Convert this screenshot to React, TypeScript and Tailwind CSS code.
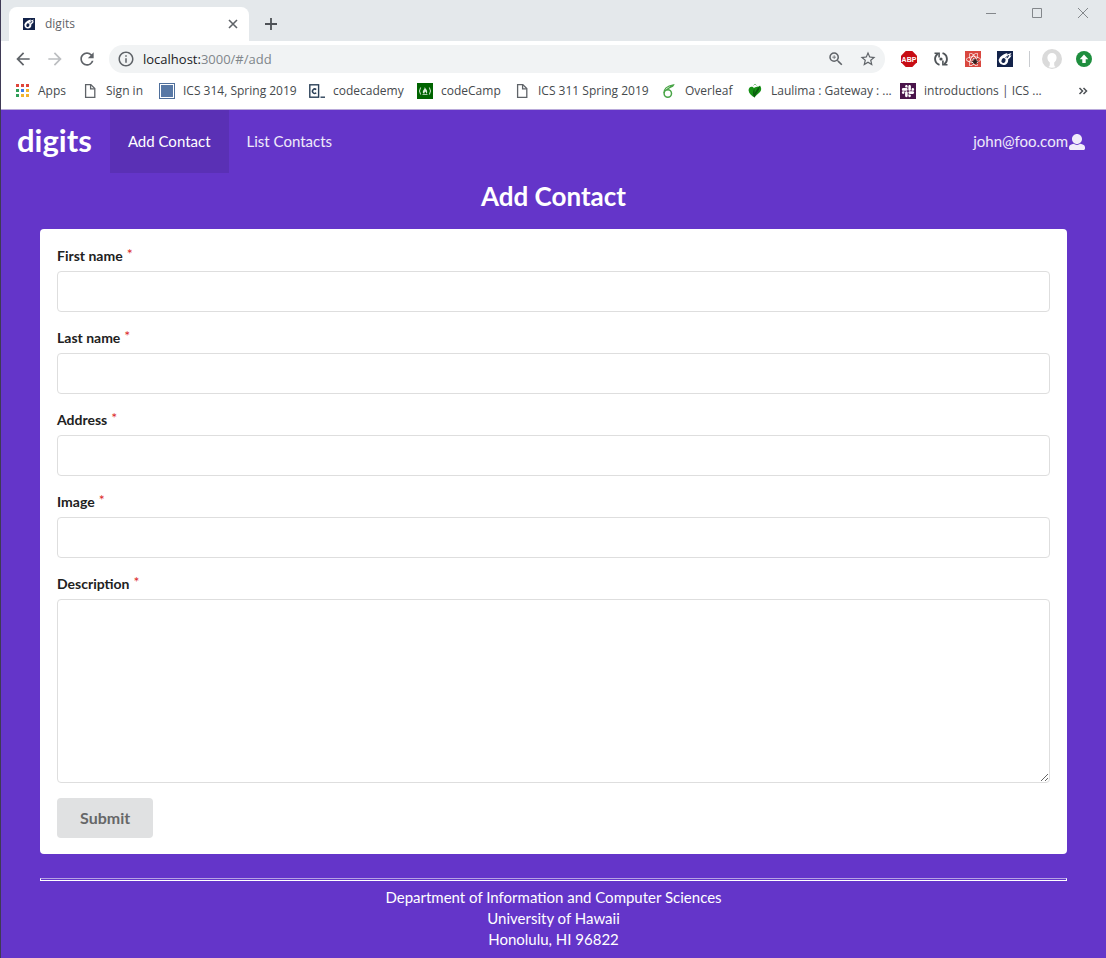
import type { ReactNode } from "react";
import {
  MdArrowBack,
  MdArrowForward,
  MdRefresh,
  MdInfoOutline,
  MdZoomIn,
  MdStarBorder,
} from "react-icons/md";
import { FaReact, FaSlack } from "react-icons/fa";

function CometIcon({ className }: { className: string }) {
  return (
    <svg viewBox="0 0 16 16" className={className} aria-hidden="true">
      <rect width="16" height="16" fill="#13234a" />
      <path d="M3 6.300C4.800 4.200 7 3 10.500 2l-.8 1.500L14.500 2l-1.700 2.700 1.700-.4c-.6 1.800-1.800 3-3.400 4.200C11.600 12 9.300 14 6.500 14A4.600 4.600 0 0 1 3 6.300Z" fill="#fff" />
      <ellipse cx="6.500" cy="9.600" rx="2" ry="2.500" transform="rotate(25 6.500 9.600)" fill="#13234a" />
      <path d="m8.500 6.600 3.300-2.200-1.600 2.800" fill="none" stroke="#13234a" strokeWidth=".9" />
    </svg>
  );
}

function AppsIcon() {
  const cells = [
    "#e0453a", "#e0453a", "#e0453a",
    "#2f9e58", "#3f7fe8", "#f2b42c",
    "#2f9e58", "#f2b42c", "#f2b42c",
  ];
  return (
    <svg viewBox="0 0 16 16" className="size-4 shrink-0" aria-hidden="true">
      {cells.map((fill, i) => (
        <rect key={i} x={2 + (i % 3) * 5} y={1 + Math.floor(i / 3) * 5} width="3" height="3" fill={fill} />
      ))}
    </svg>
  );
}

function PageIcon() {
  return (
    <svg viewBox="0 0 16 16" className="size-4 shrink-0" fill="none" stroke="#5f6368" strokeWidth="1.300" aria-hidden="true">
      <path d="M3.600 1.600h5.200l4 4v8.800H3.600Z" />
      <path d="M8.600 1.800v4h4" />
    </svg>
  );
}

function SquareIcon() {
  return (
    <svg viewBox="0 0 16 16" className="size-4 shrink-0" aria-hidden="true">
      <rect x=".5" y=".5" width="15" height="15" fill="#fff" stroke="#4f6f9b" />
      <rect x="2" y="2" width="12" height="12" fill="#5878a5" />
    </svg>
  );
}

function CodecademyIcon() {
  return (
    <svg viewBox="0 0 16 16" className="size-4 shrink-0" fill="none" stroke="#2b4058" aria-hidden="true">
      <rect x=".8" y="1.800" width="8.800" height="12.400" strokeWidth="1.400" />
      <path d="M7.200 6.600a2.200 2.200 0 1 0 0 3.200" strokeWidth="1.500" />
      <path d="M11.500 14.200H16" strokeWidth="1.400" />
    </svg>
  );
}

function CodeCampIcon() {
  return (
    <svg viewBox="0 0 16 16" className="size-4 shrink-0" aria-hidden="true">
      <rect width="16" height="16" fill="#006400" />
      <path d="M3.600 4.500q-2.200 3.500 0 7M12.400 4.500q2.200 3.500 0 7" fill="none" stroke="#d8ecd8" />
      <path d="M7.800 4c.4 1.800 2.600 2.600 2.400 5-.1 1-.7 1.600-1.200 1.900.4-1-.1-1.700-.7-2.300-.2.800-1.200 1.200-1 2.300-1-.4-1.600-1.200-1.500-2.200.2-1.700 2-2.600 2-4.700ZM5.500 11.200h5v.8h-5Z" fill="#d8ecd8" />
    </svg>
  );
}

function OverleafIcon() {
  return (
    <svg viewBox="0 0 16 16" className="size-4 shrink-0" fill="none" stroke="#4aa548" aria-hidden="true">
      <ellipse cx="6.800" cy="10.500" rx="3.700" ry="3.700" strokeWidth="1.500" />
      <path d="M3.100 10C2.800 6.500 5.500 2.800 12.500 1.900 11.500 4.300 8 4 5.600 7.200" strokeWidth="1.400" />
    </svg>
  );
}

function LeafIcon() {
  return (
    <svg viewBox="0 0 16 16" className="size-4 shrink-0" aria-hidden="true">
      <path d="M7 5.200C5.300 2.600 1.300 3.800 1.600 7.500c.3 3 3 5.500 6.200 7 .5-2.500 6.300-4.500 6.400-8.500 0-1.600-.7-2.700-1.200-3.500-.9 1.900-4.800.8-6 2.700Z" fill="#159015" />
      <path d="M7.800 14.500C5 12 6 8 7.200 5.500c.5 2 .5 3.500.3 5 1.500-2.800 2.500-5 5-7.500 1 4-3.700 7-4.700 11.500Z" fill="#0b5c0f" />
      <path d="M6.500 2.500 8 1l1.500 1.500" fill="none" stroke="#8bc48b" />
    </svg>
  );
}

function SlackTile() {
  return (
    <span className="flex size-4 shrink-0 items-center justify-center bg-[#4a154b] text-white">
      <FaSlack className="size-3.5" />
    </span>
  );
}

const bookmarks: { label: string; icon: ReactNode }[] = [
  { label: "Apps", icon: <AppsIcon /> },
  { label: "Sign in", icon: <PageIcon /> },
  { label: "ICS 314, Spring 2019", icon: <SquareIcon /> },
  { label: "codecademy", icon: <CodecademyIcon /> },
  { label: "codeCamp", icon: <CodeCampIcon /> },
  { label: "ICS 311 Spring 2019", icon: <PageIcon /> },
  { label: "Overleaf", icon: <OverleafIcon /> },
  { label: "Laulima : Gateway : ...", icon: <LeafIcon /> },
  { label: "introductions | ICS ...", icon: <SlackTile /> },
];

function TabStrip() {
  return (
    <div className="flex h-[41px] items-end bg-[#e4e8eb] pl-2">
      <div className="flex h-[34px] w-60 items-center rounded-t-lg bg-white pr-2 pl-3.5">
        <CometIcon className="size-3" />
        <span className="ml-2.5 grow text-xs text-[#5f6368]">digits</span>
        <button aria-label="Close tab" className="flex size-4 items-center justify-center text-[#5f6368]">
          <svg viewBox="0 0 10 10" className="size-2.5" stroke="currentColor" strokeWidth="1.600" aria-hidden="true">
            <path d="m1 1 8 8M9 1 1 9" />
          </svg>
        </button>
      </div>
      <button aria-label="New tab" className="ml-3.5 flex h-[34px] w-4 items-center justify-center text-[#4d5156]">
        <svg viewBox="0 0 12 12" className="size-3" stroke="currentColor" strokeWidth="1.800" aria-hidden="true">
          <path d="M6 0v12M0 6h12" />
        </svg>
      </button>
      <div className="ml-auto flex h-full items-start gap-9 pt-2 pr-[18px] text-[#83878b]">
        <button aria-label="Minimize" className="block size-2.5">
          <svg viewBox="0 0 10 10" className="size-2.5" stroke="currentColor" aria-hidden="true">
            <path d="M0 5.500h10" />
          </svg>
        </button>
        <button aria-label="Maximize" className="block size-2.5">
          <svg viewBox="0 0 10 10" className="size-2.5" fill="none" stroke="currentColor" aria-hidden="true">
            <path d="M.5.5h9v9h-9Z" />
          </svg>
        </button>
        <button aria-label="Close" className="block size-2.5">
          <svg viewBox="0 0 10 10" className="size-2.5" stroke="currentColor" aria-hidden="true">
            <path d="m0 0 10 10M10 0 0 10" />
          </svg>
        </button>
      </div>
    </div>
  );
}

function Toolbar() {
  return (
    <div className="flex h-9 items-center bg-white pr-3 pl-3 text-[#5f6368]">
      <button aria-label="Back"><MdArrowBack className="size-5" /></button>
      <button aria-label="Forward" className="ml-3 text-[#bcbec1]"><MdArrowForward className="size-5" /></button>
      <button aria-label="Reload" className="ml-3"><MdRefresh className="size-5" /></button>
      <div className="ml-3 flex h-7 grow items-center rounded-full bg-[#f1f3f4] pr-2 pl-2">
        <MdInfoOutline className="size-[18px]" />
        <span className="ml-2 grow text-[13px] leading-5 text-[#80868b]">
          <span className="text-[#202124]">localhost:</span>3000/#/add
        </span>
        <button aria-label="Zoom"><MdZoomIn className="size-[18px]" /></button>
        <button aria-label="Bookmark this page" className="ml-3.5"><MdStarBorder className="size-[18px]" /></button>
      </div>
      <div className="ml-4 flex items-center gap-4">
        <svg viewBox="0 0 16 16" className="size-4" aria-label="Ad blocker">
          <path d="M4.700 0h6.600L16 4.700v6.600L11.300 16H4.700L0 11.300V4.700Z" fill="#c70d15" />
          <text x="8" y="10.500" textAnchor="middle" fill="#fff" className="font-['Liberation_Sans'] text-[7px] font-bold">ABP</text>
        </svg>
        <svg viewBox="0 0 16 16" className="size-4" fill="none" stroke="#4f5458" aria-hidden="true">
          <path d="M6.500 13.800A6 6 0 0 1 4.800 3M9.500 2.200A6 6 0 0 1 11.200 13" strokeWidth="1.900" />
          <path d="M1.500 2.200h4.600v4.300M14.500 13.800H9.900V9.500" strokeWidth="1.600" />
          <circle cx="8" cy="8" r="1.600" fill="#4f5458" stroke="none" />
        </svg>
        <span className="relative flex size-4 items-center justify-center bg-[#d9473f] text-white">
          <FaReact className="size-[15px]" />
          <svg viewBox="0 0 8 8" className="absolute right-0.5 bottom-0.5 size-2" stroke="#30201f" aria-hidden="true">
            <ellipse cx="4" cy="4.500" rx="1.800" ry="2.500" fill="#30201f" stroke="none" />
            <path d="M1 1.500 7 7M7 1.500 1 7M.5 4.500h7" strokeWidth=".7" />
          </svg>
        </span>
        <CometIcon className="size-4" />
        <span className="h-4 w-px bg-[#c9ccd0]" />
      </div>
      <svg viewBox="0 0 20 20" className="ml-3 size-5" aria-hidden="true">
        <circle cx="10" cy="10" r="10" fill="#dadada" />
        <path d="M10 4a4.600 4.600 0 0 0-4.600 4.600c0 2.400 1 3.800 2.400 4.900v2.300q0 1.600-1.500 2.300 3.700 1.500 7.400 0-1.500-.7-1.500-2.300v-2.300c1.400-1.100 2.400-2.500 2.400-4.900A4.600 4.600 0 0 0 10 4Z" fill="#fff" />
      </svg>
      <svg viewBox="0 0 16 16" className="mr-0.5 ml-3.5 size-4" aria-hidden="true">
        <circle cx="8" cy="8" r="8" fill="#1e8e3e" />
        <path d="m8 3.500 4.300 4.700H9.700V12H6.300V8.200H3.700Z" fill="#fff" />
      </svg>
    </div>
  );
}

function BookmarksBar() {
  return (
    <nav aria-label="Bookmarks" className="flex h-[33px] items-center border-b border-[#b9aada] bg-white pr-[18px] pb-1 pl-[13px] text-xs text-[#45494d]">
      <ul className="grid grid-cols-[68px_77px_150px_108px_97px_147px_86px_153px_136px] whitespace-nowrap">
        {bookmarks.map((b) => (
          <li key={b.label}>
            <a href="#" className="flex items-center gap-2 leading-4">
              {b.icon}
              {b.label}
            </a>
          </li>
        ))}
      </ul>
      <button aria-label="More bookmarks" className="ml-auto">
        <svg viewBox="0 0 10 8" className="h-2 w-2.5" fill="none" stroke="#4d5156" strokeWidth="1.500" aria-hidden="true">
          <path d="m1.500 1 3 3-3 3M5.500 1l3 3-3 3" />
        </svg>
      </button>
    </nav>
  );
}

function FieldLabel({ id, children }: { id: string; children: string }) {
  return (
    <label htmlFor={id} className="mb-[5px] flex h-5 items-center text-sm font-bold text-[#212121]">
      {children}
      <span aria-hidden="true" className="mb-1 ml-1 font-normal text-[#db2828]">*</span>
    </label>
  );
}

const fields = [
  { id: "firstName", label: "First name" },
  { id: "lastName", label: "Last name" },
  { id: "address", label: "Address" },
  { id: "image", label: "Image" },
];

function ContactPage() {
  return (
    <div className="grow bg-[#6435c9] pb-2 font-[Lato,sans-serif] text-white">
      <header className="flex h-[63px] items-stretch pr-[21px] pl-4">
        <a href="#" className="mr-[18px] flex items-center pb-1 text-[31px] leading-10 font-bold">digits</a>
        <a href="#/add" className="flex items-center bg-[#5a30b5] px-[18px] text-[15px]">Add Contact</a>
        <a href="#/list" className="flex items-center px-[18px] text-[15px] text-white/90">List Contacts</a>
        <button className="ml-auto flex items-center text-[15px] text-white/90">
          john@foo.com
          <svg viewBox="0 0 512 512" className="ml-px size-4" fill="currentColor" aria-hidden="true">
            <path d="M256 0c88.366 0 160 71.634 160 160s-71.634 160-160 160S96 248.366 96 160 167.634 0 256 0zm183.283 333.821l-71.313-17.828c-74.923 53.890-165.738 41.864-223.940 0l-71.313 17.828C29.981 344.505 0 382.903 0 426.955V464c0 26.510 21.490 48 48 48h416c26.510 0 48-21.490 48-48v-37.045c0-44.052-29.981-82.450-72.717-93.134z" />
          </svg>
        </button>
      </header>
      <main className="mx-[39px]">
        <h2 className="pt-[7px] pb-[17px] text-center text-[26px] leading-8 font-bold">Add Contact</h2>
        <form className="rounded bg-white px-[17px] pt-[17px] pb-4" onSubmit={(e) => e.preventDefault()}>
          {fields.map((f) => (
            <div key={f.id} className="mb-4">
              <FieldLabel id={f.id}>{f.label}</FieldLabel>
              <input
                id={f.id}
                type="text"
                required
                className="block h-[41px] w-full rounded border border-[#dedede] px-4 text-base text-[#212121] outline-none focus:border-[#85b7d9]"
              />
            </div>
          ))}
          <FieldLabel id="description">Description</FieldLabel>
          <textarea
            id="description"
            required
            className="block h-[184px] w-full resize-y rounded border border-[#dedede] px-4 py-3 text-base text-[#212121] outline-none focus:border-[#85b7d9]"
          />
          <button type="submit" className="mt-[15px] block h-10 rounded bg-[#e0e1e2] px-[23px] text-base font-bold text-[#666768]">
            Submit
          </button>
        </form>
      </main>
      <footer className="mx-[39px] mt-6 text-center text-[15px] leading-[21px]">
        <hr className="mb-[6px] h-[3px] border border-white border-t-[#b7a3e3]" />
        <p>Department of Information and Computer Sciences</p>
        <p>University of Hawaii</p>
        <p>Honolulu, HI 96822</p>
      </footer>
    </div>
  );
}

export default function App() {
  return (
    <div className="flex min-h-screen flex-col border-l border-[#3f3a55] font-['Open_Sans',sans-serif]">
      <TabStrip />
      <Toolbar />
      <BookmarksBar />
      <ContactPage />
    </div>
  );
}
